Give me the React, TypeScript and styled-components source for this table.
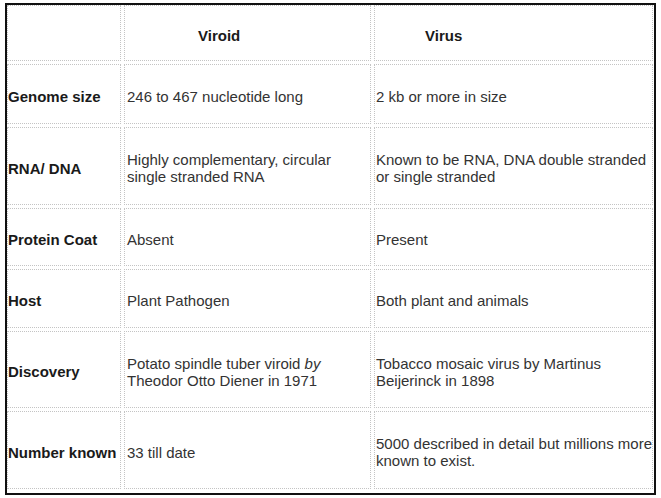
import React from "react";
import styled, { createGlobalStyle } from "styled-components";

const GlobalStyle = createGlobalStyle`
  body {
    margin: 0;
    background: #ffffff;
    font-family: "Liberation Sans", Arial, sans-serif;
  }
`;

const Frame = styled.div`
  box-sizing: border-box;
  width: 651px;
  height: 492px;
  margin: 3px 0 0 5px;
  border: 2px solid #111;
  background: #fff;
`;

const Grid = styled.div`
  display: grid;
  grid-template-columns: 114px 247px 279px;
  grid-template-rows: 56px 60px 78px 58px 59px 77px 78px;
  gap: 3px;
`;

const Cell = styled.div<{ $bold?: boolean; $indent?: number }>`
  box-sizing: border-box;
  border: 1px dotted #c4c4c4;
  display: flex;
  align-items: center;
  padding: 4px 0 0 ${({ $indent }) => ($indent ?? 1)}px;
  font-size: 15px;
  line-height: 17px;
  color: ${({ $bold }) => ($bold ? "#1a1a1a" : "#333")};
  font-weight: ${({ $bold }) => ($bold ? 700 : 400)};
`;

const rows: { label: string; viroid: React.ReactNode; virus: string }[] = [
  { label: "Genome size", viroid: "246 to 467 nucleotide long", virus: "2 kb or more in size" },
  {
    label: "RNA/ DNA",
    viroid: "Highly complementary, circular single stranded RNA",
    virus: "Known to be RNA, DNA double stranded or single stranded",
  },
  { label: "Protein Coat", viroid: "Absent", virus: "Present" },
  { label: "Host", viroid: "Plant Pathogen", virus: "Both plant and animals" },
  {
    label: "Discovery",
    viroid: (
      <span>
        Potato spindle tuber viroid <i>by</i> Theodor Otto Diener in 1971
      </span>
    ),
    virus: "Tobacco mosaic virus by Martinus Beijerinck in 1898",
  },
  {
    label: "Number known",
    viroid: "33 till date",
    virus: "5000 described in detail but millions more known to exist.",
  },
];

export default function App() {
  return (
    <>
      <GlobalStyle />
      <Frame>
        <Grid>
          <Cell />
          <Cell $bold $indent={73}>Viroid</Cell>
          <Cell $bold $indent={50}>Virus</Cell>
          {rows.map((r) => (
            <React.Fragment key={r.label}>
              <Cell $bold $indent={0}>{r.label}</Cell>
              <Cell $indent={2}>{r.viroid}</Cell>
              <Cell $indent={1}>{r.virus}</Cell>
            </React.Fragment>
          ))}
        </Grid>
      </Frame>
    </>
  );
}
